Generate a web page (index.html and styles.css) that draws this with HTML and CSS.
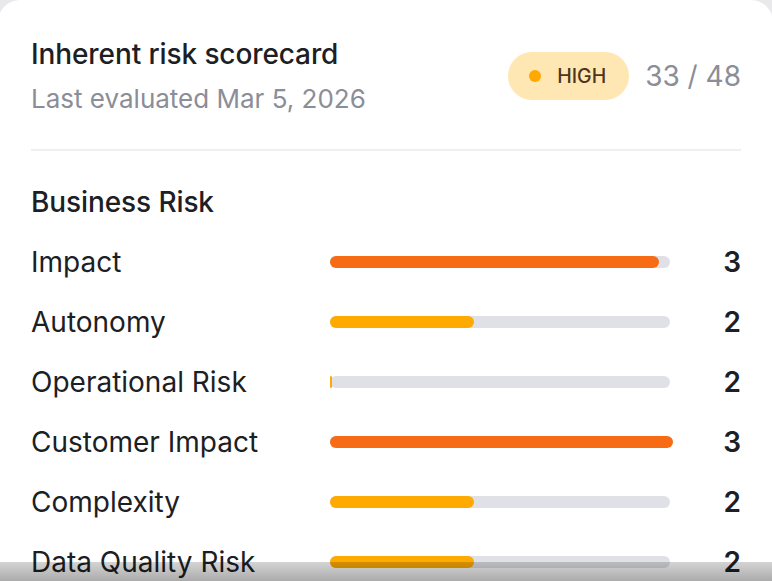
FILE: index.html
```html
<!DOCTYPE html>
<html lang="en">
<head>
<meta charset="utf-8">
<title>Inherent risk scorecard</title>
<link rel="stylesheet" href="styles.css">
</head>
<body>
<main class="card">
  <header class="card-header">
    <div class="heading">
      <h1 class="title">Inherent risk scorecard</h1>
      <p class="subtitle">Last evaluated Mar 5, 2026</p>
    </div>
    <div class="summary">
      <span class="badge"><span class="badge-dot"></span>HIGH</span>
      <span class="score">33 / 48</span>
    </div>
  </header>
  <hr class="divider">
  <section class="section">
    <h2 class="section-title">Business Risk</h2>
    <div class="rows">
      <div class="row">
        <span class="label">Impact</span>
        <span class="track"><span class="fill fill-high" style="width:96.8%"></span></span>
        <span class="value">3</span>
      </div>
      <div class="row">
        <span class="label">Autonomy</span>
        <span class="track"><span class="fill fill-mid" style="width:42.4%"></span></span>
        <span class="value">2</span>
      </div>
      <div class="row">
        <span class="label">Operational Risk</span>
        <span class="track"><span class="fill fill-mid fill-tiny" style="width:0.6%"></span></span>
        <span class="value">2</span>
      </div>
      <div class="row">
        <span class="label">Customer Impact</span>
        <span class="track"><span class="fill fill-high" style="width:100.9%"></span></span>
        <span class="value">3</span>
      </div>
      <div class="row">
        <span class="label">Complexity</span>
        <span class="track"><span class="fill fill-mid" style="width:42.4%"></span></span>
        <span class="value">2</span>
      </div>
      <div class="row">
        <span class="label">Data Quality Risk</span>
        <span class="track"><span class="fill fill-mid" style="width:42.4%"></span></span>
        <span class="value">2</span>
      </div>
    </div>
  </section>
</main>
<div class="bottom-shade"></div>
</body>
</html>
```

FILE: styles.css
```css
* { box-sizing: border-box; }

html, body {
  margin: 0;
  padding: 0;
}

body {
  background: #e9e9eb;
  font-family: Inter, "Noto Sans", "Liberation Sans", sans-serif;
  color: #1c2024;
  overflow: hidden;
  height: 581px;
}

.card {
  background: #ffffff;
  width: 775px;
  margin-left: -2px;
  border-radius: 22px 22px 0 0;
  padding: 36px 32px 40px 33px;
  min-height: 620px;
}

.card-header {
  display: flex;
  align-items: center;
  justify-content: space-between;
}

.heading {
  display: flex;
  flex-direction: column;
  gap: 11px;
}

.title {
  margin: 0;
  font-size: 28px;
  line-height: 36px;
  font-weight: 500;
  color: #1c2024;
  letter-spacing: -0.1px;
}

.subtitle {
  margin: 0;
  font-size: 26px;
  line-height: 32px;
  font-weight: 400;
  color: #8b8d98;
}

.summary {
  display: flex;
  align-items: center;
  gap: 16px;
}

.badge {
  display: inline-flex;
  align-items: center;
  gap: 16px;
  height: 48px;
  padding: 0 23px 0 21px;
  border-radius: 24px;
  background: #ffe7b3;
  color: #4f3422;
  font-size: 19.5px;
  font-weight: 500;
}

.badge-dot {
  width: 12px;
  height: 12px;
  border-radius: 50%;
  background: #ffa900;
}

.score {
  font-size: 28px;
  line-height: 36px;
  color: #8b8d98;
}

.divider {
  border: none;
  height: 2px;
  background: #efeff1;
  margin: 34px 0 0 0;
}

.section {
  padding-top: 34px;
}

.section-title {
  margin: 0;
  font-size: 28px;
  line-height: 34px;
  font-weight: 500;
  color: #1c2024;
  letter-spacing: -0.1px;
}

.rows {
  display: flex;
  flex-direction: column;
  gap: 28px;
  margin-top: 27px;
}

.row {
  display: grid;
  grid-template-columns: 299px 340px 1fr;
  align-items: center;
  height: 32px;
}

.label {
  font-size: 28px;
  line-height: 32px;
  color: #1c2024;
}

.track {
  position: relative;
  display: block;
  height: 12px;
  border-radius: 6px;
  background: #e0e1e6;
}

.fill {
  display: block;
  height: 12px;
  border-radius: 6px;
}

.fill-tiny {
  border-radius: 1px;
  min-width: 2px;
}

.fill-high { background: #f76b15; }
.fill-mid { background: #ffaa00; }

.value {
  text-align: right;
  font-size: 28px;
  line-height: 32px;
  font-weight: 600;
  color: #1c2024;
}

.bottom-shade {
  position: fixed;
  left: 0;
  right: 0;
  bottom: 0;
  height: 19px;
  background: linear-gradient(to bottom, #d4d4d4, #ababab);
  mix-blend-mode: multiply;
  pointer-events: none;
}
```
